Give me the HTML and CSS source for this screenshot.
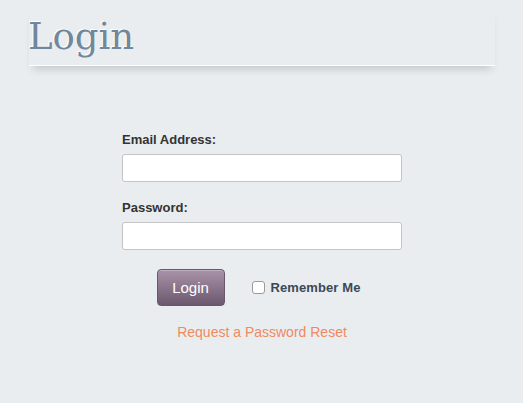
FILE: index.html
```html
<!DOCTYPE html>
<html>
<head>
<meta charset="utf-8">
<link rel="stylesheet" href="styles.css">
</head>
<body>
<div class="page">
  <div class="header">
    <h1 class="title">Login</h1>
  </div>
  <form class="login-form">
    <label class="field-label" for="email">Email Address:</label>
    <input class="text-input" id="email" type="text">
    <label class="field-label second" for="password">Password:</label>
    <input class="text-input" id="password" type="password">
    <div class="actions">
      <button type="button" class="btn">Login</button>
      <label class="remember"><span class="checkbox"></span>Remember Me</label>
    </div>
    <div class="reset-row"><a class="reset-link" href="#">Request a Password Reset</a></div>
  </form>
</div>
</body>
</html>
```
FILE: styles.css
```css
html, body {
  margin: 0;
  padding: 0;
  background: #e9edf0;
  font-family: "Liberation Sans", Arial, sans-serif;
}
.page {
  padding: 8px 28px 0 29px;
}
.header {
  width: 466px;
  padding: 7px 0 7px 0;
  border-bottom: 1px solid #ffffff;
  box-shadow: 0 7px 8px -4px rgba(40, 50, 60, 0.2);
  background: #e9edf0;
}
.title {
  margin: 0 0 0 -1px;
  font-family: "DejaVu Serif", "Liberation Serif", serif;
  font-weight: normal;
  font-size: 37px;
  line-height: 43px;
  color: #71879b;
  text-shadow: -1px -1px 0 #ffffff;
}
.login-form {
  width: 280px;
  margin: 66px auto 0 auto;
  display: flex;
  flex-direction: column;
}
.field-label {
  font-size: 13px;
  font-weight: bold;
  line-height: 16px;
  color: #333333;
  margin-bottom: 6px;
}
.field-label.second {
  margin-top: 18px;
}
.text-input {
  box-sizing: border-box;
  width: 280px;
  height: 28px;
  margin: 0;
  border: 1px solid #c4c4c4;
  border-radius: 3px;
  background: #ffffff;
}
.actions {
  display: flex;
  align-items: center;
  justify-content: center;
  margin-top: 19px;
  margin-left: -7px;
}
.btn {
  width: 68px;
  height: 37px;
  border: 1px solid #6a576c;
  border-radius: 4px;
  background: linear-gradient(#a893a9, #6c586e);
  color: #ffffff;
  font-family: "Liberation Sans", Arial, sans-serif;
  font-size: 15px;
  padding: 0;
  box-shadow: inset 0 1px 0 rgba(255,255,255,0.25);
}
.remember {
  display: flex;
  align-items: center;
  margin-left: 27px;
  font-size: 13px;
  font-weight: bold;
  color: #3b4856;
  letter-spacing: 0.1px;
}
.checkbox {
  box-sizing: border-box;
  width: 13px;
  height: 13px;
  border: 1px solid #9a9a9a;
  border-radius: 3px;
  background: #ffffff;
  margin-right: 6px;
}
.reset-row {
  text-align: center;
  margin-top: 17px;
}
.reset-link {
  font-size: 14px;
  color: #f08a5e;
  text-decoration: none;
}
```
